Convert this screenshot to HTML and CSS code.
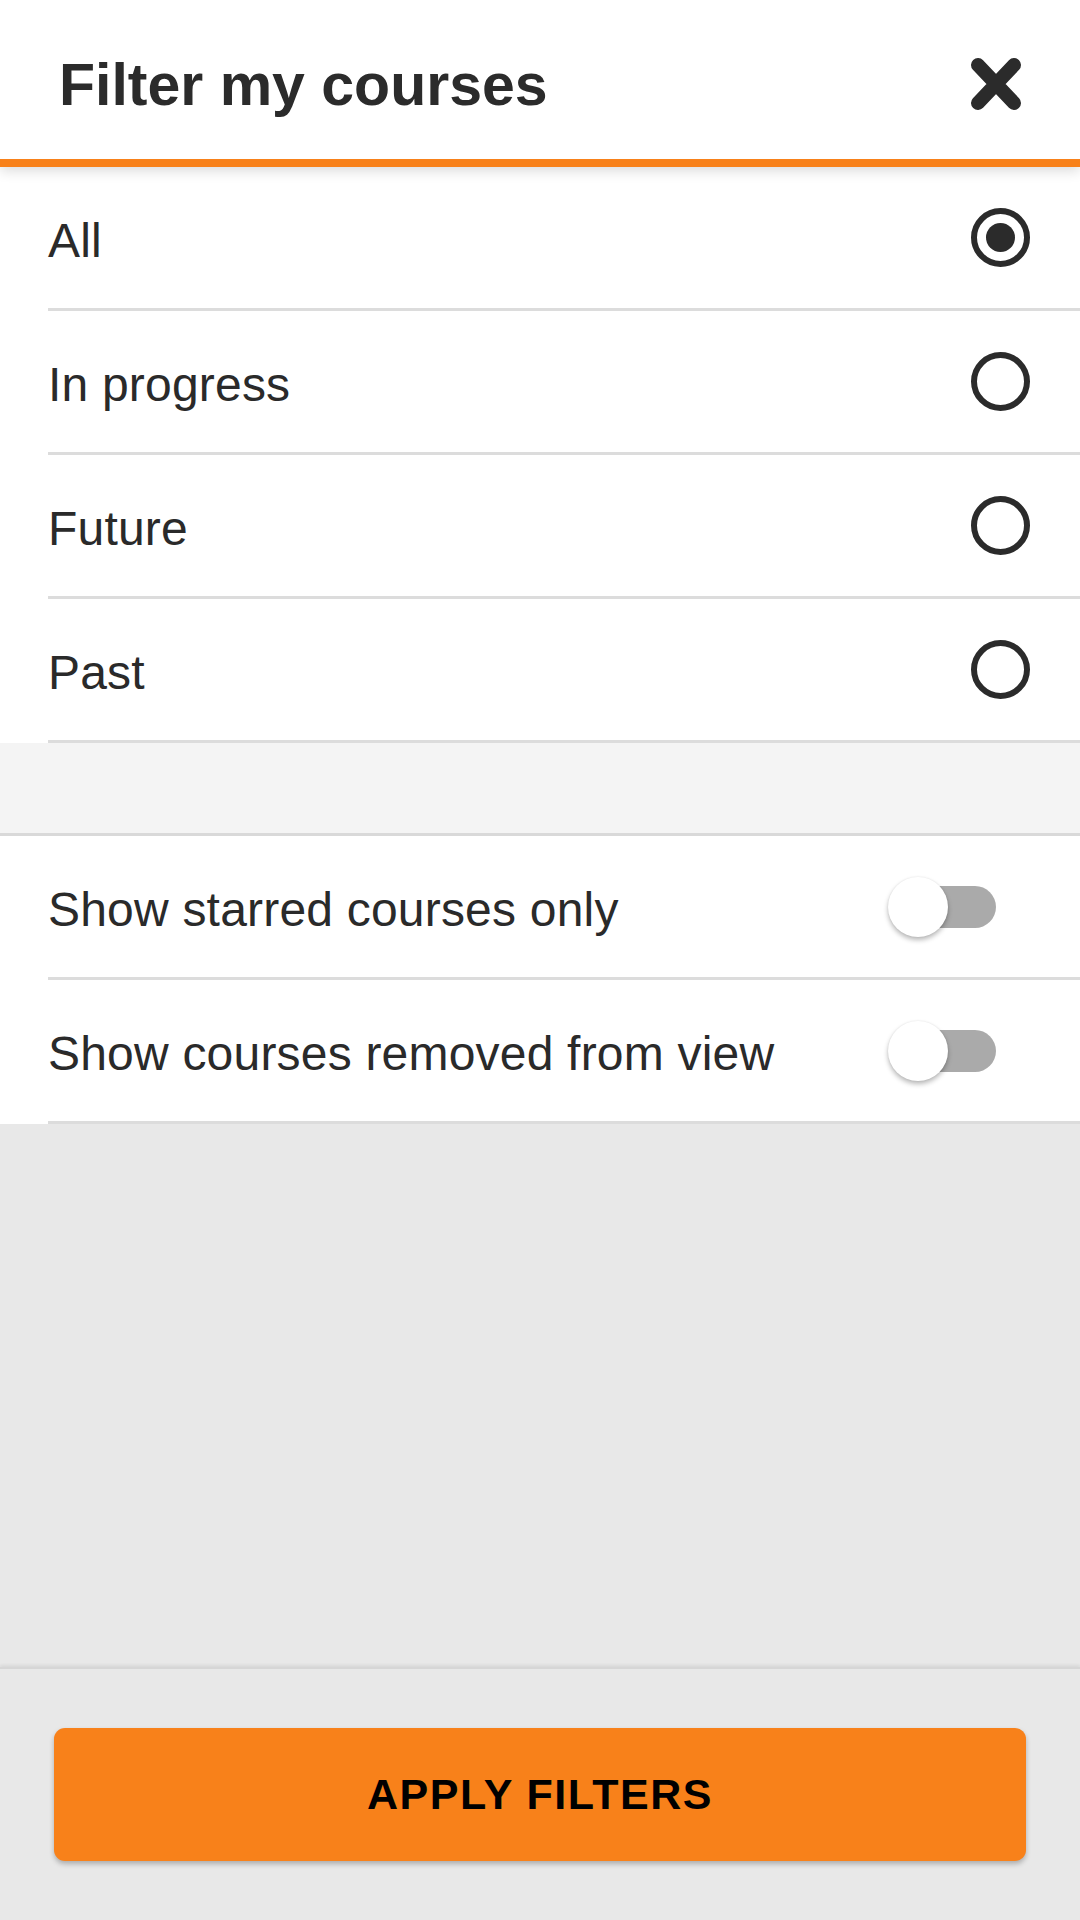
FILE: index.html
```html
<!DOCTYPE html>
<html lang="en">
<head>
<meta charset="utf-8">
<title>Filter my courses</title>
<link rel="stylesheet" href="styles.css">
</head>
<body>
<div class="screen">
  <header class="header">
    <h1 class="title">Filter my courses</h1>
    <button class="close" aria-label="Close">
      <svg width="52" height="54" viewBox="0 0 52 54">
        <path d="M8 8 L44 46 M44 8 L8 46" stroke="#2b2b2b" stroke-width="14" stroke-linecap="round" fill="none"/>
      </svg>
    </button>
  </header>

  <ul class="list radios">
    <li class="row"><div class="row-inner"><span class="label">All</span><span class="radio checked"></span></div></li>
    <li class="row"><div class="row-inner"><span class="label">In progress</span><span class="radio"></span></div></li>
    <li class="row"><div class="row-inner"><span class="label">Future</span><span class="radio"></span></div></li>
    <li class="row"><div class="row-inner"><span class="label">Past</span><span class="radio"></span></div></li>
  </ul>

  <div class="band"></div>

  <ul class="list toggles">
    <li class="row"><div class="row-inner toggle-inner"><span class="label">Show starred courses only</span><span class="toggle"><span class="knob"></span></span></div></li>
    <li class="row"><div class="row-inner toggle-inner"><span class="label">Show courses removed from view</span><span class="toggle"><span class="knob"></span></span></div></li>
  </ul>

  <div class="spacer"></div>

  <footer class="footer">
    <button class="apply">APPLY FILTERS</button>
  </footer>
</div>
</body>
</html>
```

FILE: styles.css
```css
html, body {
  margin: 0;
  padding: 0;
}
body {
  background: #e8e8e8;
  font-family: "Liberation Sans", Arial, sans-serif;
  color: #2a2a2a;
}
.screen {
  width: 1080px;
  height: 1920px;
  display: flex;
  flex-direction: column;
  overflow: hidden;
}
.header {
  height: 159px;
  flex: 0 0 auto;
  background: #ffffff;
  border-bottom: 8px solid #f8811a;
  box-shadow: 0 4px 12px rgba(0, 0, 0, 0.14);
  display: flex;
  align-items: center;
  justify-content: space-between;
  padding: 0 58px 0 59px;
  position: relative;
  z-index: 2;
}
.title {
  margin: 0;
  font-size: 59px;
  font-weight: 700;
  color: #2b2b2b;
  padding-top: 11px;
}
.close {
  border: 0;
  background: transparent;
  padding: 0;
  width: 52px;
  height: 54px;
  display: flex;
  margin-top: 9px;
}
.list {
  list-style: none;
  margin: 0;
  padding: 0;
  background: #ffffff;
  flex: 0 0 auto;
}
.row {
  padding-left: 48px;
}
.row-inner {
  height: 141px;
  border-bottom: 3px solid #dcdcdc;
  display: flex;
  align-items: center;
  justify-content: space-between;
  padding-right: 50px;
}
.label {
  font-size: 48px;
  letter-spacing: 0.2px;
  padding-top: 5px;
  color: #2a2a2a;
}
.radio {
  width: 47px;
  height: 47px;
  border: 6px solid #2b2b2b;
  border-radius: 50%;
  display: flex;
  align-items: center;
  justify-content: center;
}
.radio.checked::after {
  content: "";
  width: 29px;
  height: 29px;
  border-radius: 50%;
  background: #2b2b2b;
}
.band {
  height: 90px;
  flex: 0 0 auto;
  background: #f4f4f4;
  border-bottom: 3px solid #d9d9d9;
}
.toggle-inner {
  padding-right: 84px;
}
.toggle {
  width: 94px;
  height: 42px;
  border-radius: 21px;
  background: #aaaaaa;
  position: relative;
}
.knob {
  position: absolute;
  left: -14px;
  top: -9px;
  width: 60px;
  height: 60px;
  border-radius: 50%;
  background: #ffffff;
  box-shadow: 0 3px 5px rgba(0, 0, 0, 0.28), 0 0 2px rgba(0, 0, 0, 0.08);
}
.spacer {
  flex: 1 1 auto;
}
.footer {
  flex: 0 0 auto;
  height: 253px;
  border-top: 2px solid #d6d6d6;
  box-shadow: 0 -2px 3px rgba(0, 0, 0, 0.07);
  background: #e8e8e8;
  padding: 59px 54px 0;
  box-sizing: border-box;
}
.apply {
  width: 100%;
  height: 133px;
  border: 0;
  border-radius: 11px;
  background: #f8811a;
  color: #000000;
  font-family: "Liberation Sans", Arial, sans-serif;
  font-size: 43px;
  font-weight: 700;
  letter-spacing: 1.5px;
  box-shadow: 0 3px 5px rgba(0, 0, 0, 0.25);
  padding: 0;
}
```
